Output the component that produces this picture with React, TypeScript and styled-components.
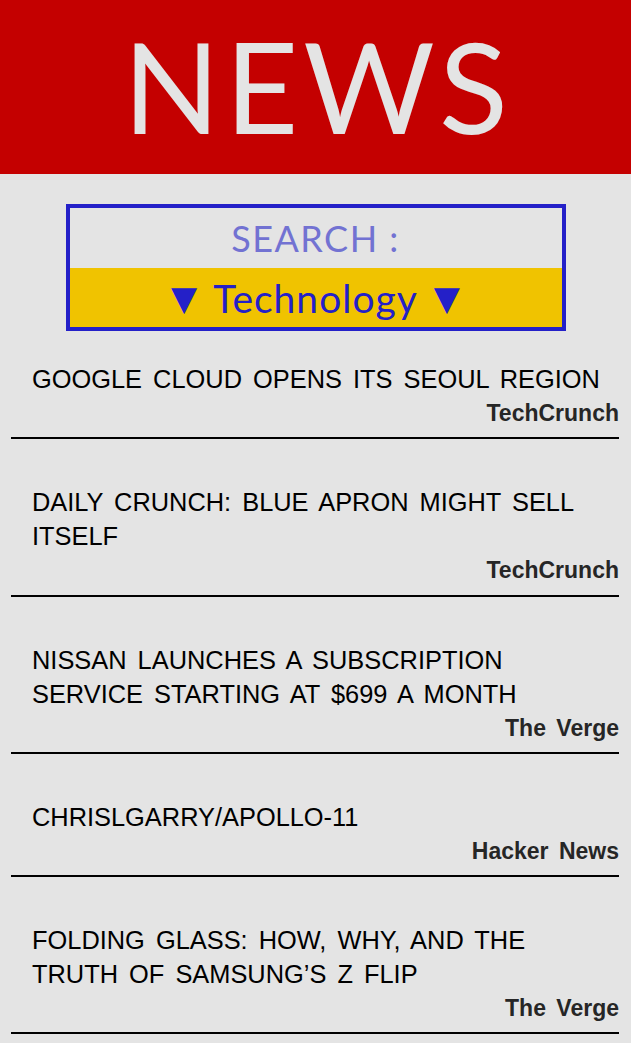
import React from "react";
import styled, { createGlobalStyle } from "styled-components";

const GlobalStyle = createGlobalStyle`
  * { box-sizing: border-box; }
  html, body { margin: 0; padding: 0; background: #e4e4e4; }
  body { font-family: "Liberation Sans", Arial, sans-serif; }
`;

const Page = styled.div`
  display: flex;
  flex-direction: column;
  background: #e4e4e4;
  min-height: 1043px;
`;

const Header = styled.header`
  height: 174px;
  padding-bottom: 4px;
  background: #c40000;
  display: flex;
  align-items: center;
  justify-content: center;
`;

const Title = styled.h1`
  margin: 0;
  font-family: "Lato", "Open Sans", sans-serif;
  font-weight: 400;
  font-size: 127px;
  line-height: 1;
  color: #e4e4e4;
  letter-spacing: 5px;
  padding-left: 5px;
`;

const SearchBox = styled.div`
  align-self: center;
  margin-top: 30px;
  width: 500px;
  border: 4px solid #2420c8;
  display: grid;
  grid-template-rows: 60px 59px;
  font-family: "Lato", "Open Sans", sans-serif;
`;

const SearchLabel = styled.div`
  display: flex;
  align-items: center;
  justify-content: center;
  font-size: 36px;
  color: #7272d2;
  letter-spacing: 1.5px;
`;

const CategoryRow = styled.div`
  display: flex;
  align-items: center;
  justify-content: center;
  background: #f0c300;
  color: #2420c8;
  font-size: 39px;
  letter-spacing: 1px;
  gap: 16px;
`;

const Arrow = styled.span`
  font-family: "DejaVu Sans", sans-serif;
  font-size: 34px;
  letter-spacing: 0;
`;

const List = styled.div`
  display: flex;
  flex-direction: column;
  margin: 0 12px 0 11px;
`;

const Article = styled.article<{ $first?: boolean }>`
  margin-top: ${(p) => (p.$first ? "0" : "15px")};
  padding-top: 31px;
  border-bottom: 2px solid #000;
  display: flex;
  flex-direction: column;
  word-spacing: 0.25em;
`;

const Headline = styled.h2`
  margin: 0;
  padding: 0 6px 0 21px;
  font-size: 25.4px;
  font-weight: 400;
  line-height: 34px;
  color: #000;
  text-transform: uppercase;
`;

const Source = styled.div`
  margin-top: 4px;
  padding-bottom: 11.3px;
  font-size: 23px;
  line-height: 26px;
  font-weight: 700;
  color: #262626;
  text-align: right;
`;

const articles = [
  { title: "Google Cloud opens its Seoul region", source: "TechCrunch" },
  { title: "Daily Crunch: Blue Apron might sell itself", source: "TechCrunch" },
  {
    title: "Nissan launches a subscription service starting at $699 a month",
    source: "The Verge",
  },
  { title: "chrislgarry/Apollo-11", source: "Hacker News" },
  {
    title: "Folding glass: how, why, and the truth of Samsung\u2019s Z Flip",
    source: "The Verge",
  },
];

export default function App() {
  return (
    <>
      <GlobalStyle />
      <Page>
        <Header>
          <Title>NEWS</Title>
        </Header>
        <SearchBox>
          <SearchLabel>SEARCH :</SearchLabel>
          <CategoryRow>
            <Arrow>▼</Arrow>
            <span>Technology</span>
            <Arrow>▼</Arrow>
          </CategoryRow>
        </SearchBox>
        <List>
          {articles.map((a, i) => (
            <Article key={i} $first={i === 0}>
              <Headline>{a.title}</Headline>
              <Source>{a.source}</Source>
            </Article>
          ))}
        </List>
      </Page>
    </>
  );
}
